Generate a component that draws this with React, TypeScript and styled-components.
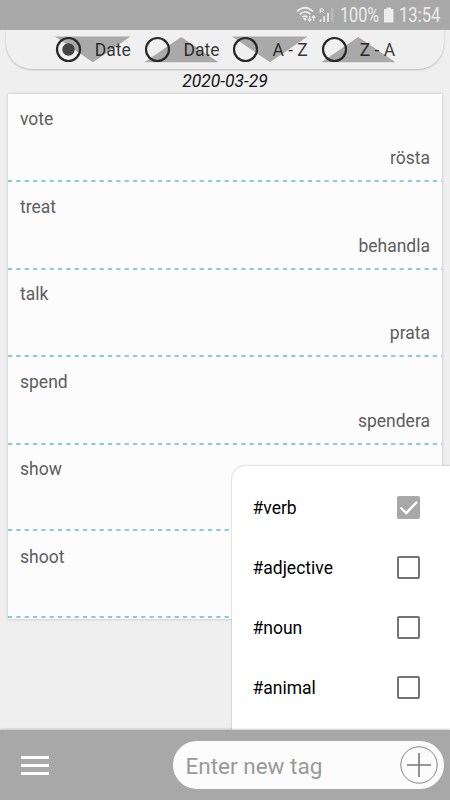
import React, { useState } from "react";
import styled, { createGlobalStyle } from "styled-components";

const GlobalStyle = createGlobalStyle`
  * { box-sizing: border-box; }
  body { margin: 0; background: #efefef; font-family: Roboto, "Liberation Sans", sans-serif; }
`;

const Screen = styled.div`
  position: relative;
  width: 450px;
  height: 800px;
  overflow: hidden;
  display: flex;
  flex-direction: column;
  background: #efefef;
`;

const StatusBar = styled.header`
  flex: none;
  height: 30px;
  display: flex;
  align-items: center;
  padding-left: 296px;
  background: #a8a8a8;
  color: #ececec;
  z-index: 2;
`;

const StatusIcons = styled.svg`
  flex: none;
  display: block;
`;

const StatusText = styled.span<{ $width: number; $scale: number }>`
  flex: none;
  width: ${(p) => p.$width}px;
  padding-top: 2px;
  font-size: 19.8px;
  line-height: 30px;
  white-space: nowrap;
  transform: scaleX(${(p) => p.$scale});
  transform-origin: left center;
`;

const SortBar = styled.div`
  flex: none;
  height: 39px;
  margin: 0 6px;
  padding: 6px 0 0 49px;
  display: flex;
  border-radius: 0 0 26px 26px;
  background: #f0f0f0;
  box-shadow: 0 1px 2px rgba(0, 0, 0, 0.22);
`;

const SortOption = styled.button`
  position: relative;
  flex: none;
  width: 88.6px;
  height: 27px;
  padding: 0;
  border: 0;
  background: none;
  text-align: left;
  font-family: inherit;
`;

const SortDrawing = styled.svg`
  display: block;
`;

const SortLabel = styled.span<{ $left: number }>`
  position: absolute;
  left: ${(p) => p.$left}px;
  top: 0;
  font-size: 17.5px;
  line-height: 28px;
  white-space: pre;
  color: rgba(0, 0, 0, 0.78);
`;

const DateHeading = styled.div`
  flex: none;
  height: 25px;
  text-align: center;
  font-size: 17.5px;
  line-height: 25px;
  font-style: italic;
  color: #151515;
`;

const WordList = styled.main`
  flex: none;
  width: 434px;
  margin-left: 8px;
  background: #fcfcfc;
  box-shadow: 0 0 3px rgba(0, 0, 0, 0.22);
`;

const WordRow = styled.div`
  height: 87.5px;
  display: flex;
  flex-direction: column;
  padding: 15px 12px 0;
  font-size: 17.5px;
  line-height: 20px;
  color: #5d5d5d;
`;

const Translation = styled.span`
  align-self: flex-end;
  height: 20px;
  margin-top: 19px;
`;

const DashedRule = styled.svg`
  flex: none;
  display: block;
  width: 434px;
  height: 4px;
  margin: 11px -12px 0;
`;

const TagPanel = styled.aside`
  position: absolute;
  left: 232px;
  right: 0;
  top: 466px;
  height: 265px;
  padding: 12px 30px 0 20.5px;
  border-radius: 13px 0 0 0;
  background: #fff;
  box-shadow: 0 0 2px rgba(0, 0, 0, 0.33);
`;

const TagRow = styled.label`
  height: 60px;
  display: flex;
  align-items: center;
  justify-content: space-between;
  font-size: 17.5px;
  color: #000;
`;

const CheckBox = styled.span<{ $checked: boolean }>`
  width: 23px;
  height: 23px;
  margin-bottom: 1px;
  display: block;
  border-radius: 2px;
  border: ${(p) => (p.$checked ? "0" : "2px solid #737373")};
  background: ${(p) => (p.$checked ? "#a8a8a8" : "transparent")};
`;

const BottomBar = styled.footer`
  flex: none;
  height: 70px;
  margin-top: auto;
  padding: 0 6px 0 21px;
  display: flex;
  align-items: center;
  justify-content: space-between;
  background: #a8a8a8;
  box-shadow: 0 -1px 2px rgba(0, 0, 0, 0.2);
  z-index: 2;
`;

const MenuButton = styled.button`
  width: 28px;
  height: 19px;
  padding: 0;
  border: 0;
  background: none;
  display: flex;
  flex-direction: column;
  justify-content: space-between;
`;

const MenuLine = styled.span`
  width: 28px;
  height: 3px;
  background: #fff;
`;

const TagField = styled.div`
  width: 271px;
  height: 48px;
  padding: 0 6px 0 12.5px;
  display: flex;
  align-items: center;
  justify-content: space-between;
  border-radius: 24px;
  background: #fcfcfc;
`;

const TagInput = styled.input`
  width: 200px;
  height: 32px;
  margin-top: 2px;
  padding: 0;
  border: 0;
  outline: 0;
  background: transparent;
  font: 22.5px Roboto, "Liberation Sans", sans-serif;
  color: #444;
  &::placeholder { color: #999; opacity: 1; }
`;

const AddButton = styled.button`
  width: 38px;
  height: 38px;
  padding: 0;
  border: 0;
  background: none;
`;

const sorts = [
  { label: "Date", down: true, labelLeft: 39.8 },
  { label: "Date", down: false, labelLeft: 40 },
  { label: "A - Z", down: true, labelLeft: 40.2 },
  { label: "Z - A", down: false, labelLeft: 39 },
];

const words = [
  { word: "vote", translation: "rösta" },
  { word: "treat", translation: "behandla" },
  { word: "talk", translation: "prata" },
  { word: "spend", translation: "spendera" },
  { word: "show", translation: "" },
  { word: "shoot", translation: "" },
];

const tags = ["#verb", "#adjective", "#noun", "#animal"];

function SystemStatus() {
  return (
    <StatusBar>
      <StatusIcons width="44" height="30" fill="none" stroke="#ececec">
        <path d="M1 11.5Q9 4 17 11.5M3.8 14.3Q9 9.7 14.3 14.2M6.5 17.2Q9 15 11.5 17.2" strokeWidth="1.7" />
        <path d="M7 18.5L9 21L10.5 19.2L9.5 17.5Z" fill="#ececec" stroke="none" />
        <path d="M13.7 16V21M11.9 19L13.7 21.2L15.3 19M17.6 21V16M15.9 18L17.6 15.8L19.3 18" strokeWidth="1.2" />
        <path d="M24.2 13V8.8H26.2Q27.6 8.8 27.6 10Q27.6 11.1 26.2 11.1H24.2M26.2 11.1L27.8 13" strokeWidth="1" />
        <path d="M24.5 22V19.5M28.2 22V16.2M32 22V13" strokeWidth="1.7" />
        <path d="M36.3 22V8" strokeWidth="1.8" opacity=".35" />
      </StatusIcons>
      <StatusText $width={44} $scale={0.82}>100%</StatusText>
      <StatusIcons width="15" height="30" fill="#ececec">
        <path d="M2.5 7.5H7V9H9.5V22.5H0V9H2.5Z" />
      </StatusIcons>
      <StatusText $width={42} $scale={0.84}>13:54</StatusText>
    </StatusBar>
  );
}

export default function App() {
  const [sort, setSort] = useState(0);
  const [selected, setSelected] = useState<string[]>(["#verb"]);
  const toggle = (tag: string) =>
    setSelected((old) => (old.includes(tag) ? old.filter((t) => t !== tag) : [...old, tag]));

  return (
    <>
      <GlobalStyle />
      <Screen>
        <SystemStatus />
        <SortBar>
          {sorts.map((s, i) => (
            <SortOption key={i} onClick={() => setSort(i)}>
              <SortDrawing width="82" height="27">
                <path d={s.down ? "M0 .5H75.5L38 26.3Z" : "M.5 26.2H74.5L37.2 1Z"} fill="#a9a9a9" />
                <circle cx="13.5" cy="13.5" r="11.5" fill="none" stroke="#292929" strokeWidth="2.2" />
                {sort === i && <circle cx="13.5" cy="13.5" r="6.2" fill="#444" />}
              </SortDrawing>
              <SortLabel $left={s.labelLeft}>{s.label}</SortLabel>
            </SortOption>
          ))}
        </SortBar>
        <DateHeading>2020-03-29</DateHeading>
        <WordList>
          {words.map(({ word, translation }) => (
            <WordRow key={word}>
              <span>{word}</span>
              <Translation>{translation}</Translation>
              <DashedRule>
                <path d="M0 2H434" stroke="#62bad2" strokeWidth="1.4" strokeDasharray="4.2 4.13" />
              </DashedRule>
            </WordRow>
          ))}
        </WordList>
        <TagPanel>
          {tags.map((tag) => (
            <TagRow key={tag} onClick={() => toggle(tag)}>
              <span>{tag}</span>
              <CheckBox $checked={selected.includes(tag)}>
                {selected.includes(tag) && (
                  <svg width="23" height="23" fill="none" stroke="#fff" strokeWidth="2.4">
                    <path d="M3.5 11.5L9.3 17L20 5.8" />
                  </svg>
                )}
              </CheckBox>
            </TagRow>
          ))}
        </TagPanel>
        <BottomBar>
          <MenuButton aria-label="Menu">
            <MenuLine />
            <MenuLine />
            <MenuLine />
          </MenuButton>
          <TagField>
            <TagInput placeholder="Enter new tag" />
            <AddButton aria-label="Add tag">
              <svg width="38" height="38" fill="none" stroke="#777">
                <circle cx="19" cy="19" r="18.2" strokeWidth="0.9" />
                <path d="M7 19H31M19 7V31" strokeWidth="1.6" />
              </svg>
            </AddButton>
          </TagField>
        </BottomBar>
      </Screen>
    </>
  );
}
